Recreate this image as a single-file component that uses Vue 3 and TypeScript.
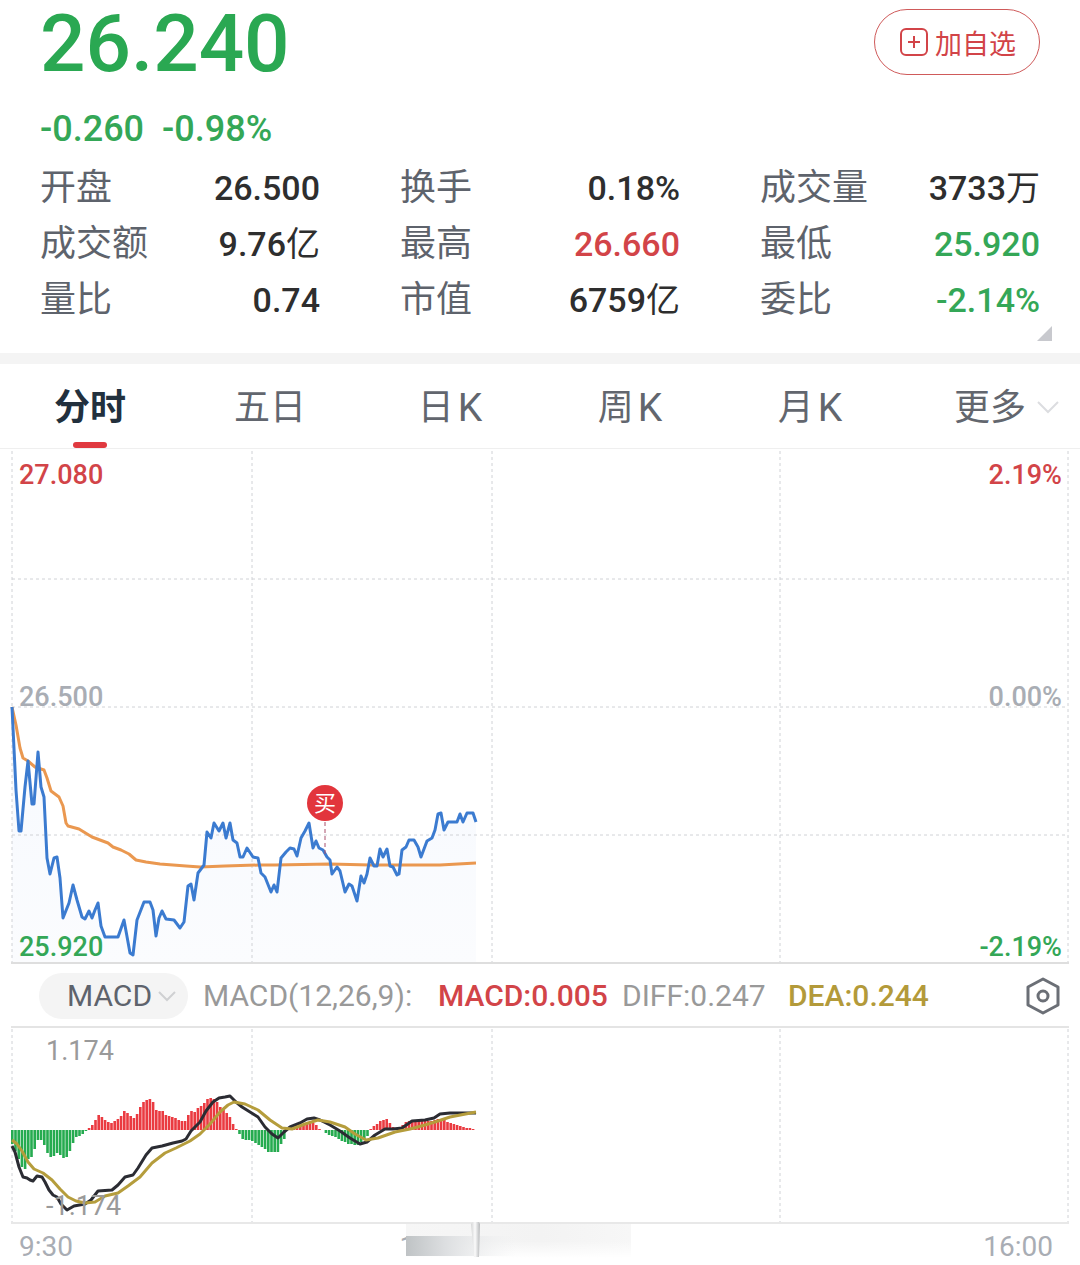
<script setup lang="ts">
import { ref } from 'vue'

type Tone = 'plain' | 'up' | 'down'
interface Stat { label: string; value: string; unit?: string; tone: Tone }
type Point = [number, number]

const stats: Stat[] = [
  { label: '开盘', value: '26.500', tone: 'plain' },
  { label: '换手', value: '0.18%', tone: 'plain' },
  { label: '成交量', value: '3733', unit: '万', tone: 'plain' },
  { label: '成交额', value: '9.76', unit: '亿', tone: 'plain' },
  { label: '最高', value: '26.660', tone: 'up' },
  { label: '最低', value: '25.920', tone: 'down' },
  { label: '量比', value: '0.74', tone: 'plain' },
  { label: '市值', value: '6759', unit: '亿', tone: 'plain' },
  { label: '委比', value: '-2.14%', tone: 'down' },
]

const tabs = [
  { zh: '分时', latin: '' },
  { zh: '五日', latin: '' },
  { zh: '日', latin: 'K' },
  { zh: '周', latin: 'K' },
  { zh: '月', latin: 'K' },
  { zh: '更多', latin: '' },
]
const active = ref(0)
const indicator = ref('MACD')

// Session gridlines shared by both charts
const columns = [12, 252, 492, 780, 1068]

const price: Point[] = [
  [12, 707], [16, 790], [19, 831], [21, 831], [25, 787], [28, 761], [32, 804], [34, 804], [38, 752], [41, 787],
  [44, 797], [47, 858], [50, 874], [54, 858], [57, 857], [60, 878], [63, 918], [69, 903], [73, 885], [77, 900],
  [82, 917], [85, 919], [89, 911], [92, 918], [95, 910], [98, 903], [101, 926], [105, 937], [118, 937], [124, 920],
  [130, 953], [133, 955], [137, 920], [144, 902], [150, 902], [153, 910], [156, 936], [159, 918], [162, 911],
  [166, 919], [174, 920], [180, 928], [184, 922], [188, 886], [191, 884], [194, 900], [198, 873], [204, 865],
  [207, 832], [211, 838], [214, 823], [219, 831], [223, 823], [226, 838], [230, 823], [233, 840], [237, 843],
  [240, 857], [243, 857], [247, 848], [253, 857], [258, 858], [261, 873], [265, 877], [271, 892], [274, 885],
  [277, 892], [281, 858], [286, 852], [290, 848], [294, 849], [297, 856], [301, 838], [305, 831], [309, 823],
  [313, 848], [316, 841], [319, 848], [323, 850], [327, 857], [330, 860], [332, 874], [337, 867], [340, 871],
  [345, 892], [349, 884], [352, 886], [357, 901], [361, 876], [364, 883], [367, 874], [370, 858], [374, 866],
  [377, 866], [380, 849], [383, 857], [387, 849], [390, 866], [393, 867], [397, 875], [399, 874], [402, 850],
  [406, 847], [409, 840], [414, 840], [418, 847], [421, 857], [427, 841], [432, 838], [435, 830], [438, 814],
  [441, 813], [444, 830], [448, 822], [457, 822], [460, 814], [463, 822], [467, 813], [473, 813], [476, 822],
]
const average: Point[] = [
  [12, 707], [16, 725], [20, 748], [23, 758], [28, 761], [35, 767], [44, 770], [47, 778], [51, 791], [59, 797],
  [63, 806], [66, 823], [68, 826], [79, 829], [92, 837], [108, 843], [113, 847], [121, 850], [129, 854],
  [136, 860], [146, 862], [160, 864], [186, 866], [200, 867], [225, 866], [260, 865], [275, 865], [330, 864],
  [370, 865], [405, 865], [440, 865], [476, 863],
]
const diff: Point[] = [
  [12, 1146], [15, 1152], [19, 1167], [23, 1177], [27, 1178], [30, 1180], [33, 1181], [37, 1176], [42, 1177],
  [45, 1182], [49, 1190], [53, 1195], [57, 1197], [61, 1204], [67, 1210], [74, 1206], [85, 1204], [91, 1200],
  [98, 1191], [112, 1190], [118, 1185], [125, 1177], [133, 1175], [138, 1168], [146, 1155], [152, 1148],
  [162, 1146], [173, 1143], [182, 1141], [186, 1139], [191, 1131], [200, 1122], [206, 1111], [213, 1102],
  [219, 1098], [225, 1097], [230, 1096], [236, 1102], [242, 1107], [250, 1112], [258, 1117], [265, 1127],
  [272, 1134], [278, 1138], [284, 1132], [290, 1127], [300, 1123], [307, 1119], [314, 1118], [320, 1120],
  [330, 1125], [340, 1131], [350, 1138], [360, 1144], [367, 1142], [375, 1135], [385, 1129], [393, 1129],
  [402, 1128], [412, 1121], [425, 1120], [434, 1118], [440, 1114], [450, 1113], [476, 1113],
]
const dea: Point[] = [
  [12, 1140], [17, 1144], [22, 1151], [28, 1162], [34, 1169], [43, 1173], [52, 1180], [60, 1189], [68, 1197],
  [76, 1201], [85, 1203], [95, 1202], [105, 1196], [118, 1193], [128, 1186], [140, 1177], [152, 1163],
  [165, 1153], [176, 1148], [190, 1141], [200, 1134], [210, 1124], [220, 1112], [228, 1105], [234, 1102],
  [245, 1104], [258, 1110], [270, 1120], [282, 1128], [292, 1129], [305, 1124], [318, 1120], [330, 1122],
  [345, 1127], [355, 1134], [366, 1140], [378, 1138], [395, 1132], [410, 1129], [425, 1125], [438, 1121],
  [450, 1117], [476, 1112],
]
// Histogram envelope: x and signed bar height
const envelope: Point[] = [
  [12, -14], [15, -20], [18, -28], [21, -36], [24, -42], [27, -30], [30, -28], [33, -25], [36, -12], [39, -9],
  [42, -11], [45, -17], [48, -25], [51, -27], [54, -26], [57, -23], [60, -25], [63, -28], [66, -28], [69, -23],
  [72, -15], [75, -8], [79, -6], [82, -4], [85, -2], [88, 1], [91, 4], [94, 8], [98, 15], [101, 13], [104, 11],
  [107, 8], [111, 7], [114, 9], [118, 11], [121, 14], [124, 19], [127, 17], [130, 14], [134, 12], [137, 16],
  [140, 23], [143, 28], [147, 30], [150, 31], [153, 28], [156, 20], [162, 19], [166, 15], [172, 13], [176, 12],
  [179, 9], [185, 9], [188, 15], [191, 19], [194, 17], [197, 22], [203, 25], [207, 31], [211, 32], [215, 31],
  [219, 24], [222, 21], [226, 17], [229, 15], [232, 7], [235, 3], [238, -2], [242, -9], [249, -10], [253, -11],
  [257, -14], [261, -17], [265, -19], [268, -22], [278, -22], [281, -13], [284, -9], [287, 1], [292, 2], [300, 4],
  [309, 8], [312, 8], [316, 5], [319, 1], [323, 0], [325, -3], [330, -5], [336, -7], [342, -11], [348, -14],
  [358, -15], [362, -11], [367, -7], [370, 1], [375, 5], [380, 9], [386, 11], [389, 8], [392, 4], [396, 1],
  [400, 3], [403, 6], [408, 9], [420, 9], [430, 9], [440, 11], [446, 9], [452, 6], [460, 4], [468, 2], [475, 1],
]

const line = (pts: Point[]): string => pts.map((p) => p.join(',')).join(' ')

function heightAt(x: number): number {
  const i = envelope.findIndex((p) => p[0] >= x)
  if (i < 0) return envelope[envelope.length - 1][1]
  if (i === 0) return envelope[0][1]
  const [x0, y0] = envelope[i - 1]
  const [x1, y1] = envelope[i]
  return Math.round(y0 + ((y1 - y0) * (x - x0)) / (x1 - x0))
}

// One bar per traded minute, 330 minutes over the full width
const step = (1068 - 12) / 330
const bars = Array.from({ length: 145 }, (_, i) => {
  const x = 12 + i * step
  const h = heightAt(x)
  return { x: x - 1, y: h > 0 ? 1130 - h : 1130, h: Math.abs(h), up: h > 0 }
})
</script>

<template>
  <main class="page">
    <header class="quote">
      <div class="top">
        <div class="last">26.240</div>
        <button class="add" type="button">
          <svg width="28" height="28" viewBox="0 0 28 28" fill="none" stroke="currentColor" aria-hidden="true">
            <rect x="1" y="1" width="26" height="26" rx="5" stroke-width="2" />
            <path d="M14 8v12M8 14h12" stroke-width="2" />
          </svg>
          <span>加自选</span>
        </button>
      </div>
      <div class="change"><span>-0.260</span><span>-0.98%</span></div>
      <dl class="stats">
        <div v-for="s in stats" :key="s.label" class="stat">
          <dt>{{ s.label }}</dt>
          <dd :class="s.tone">{{ s.value }}<span v-if="s.unit" class="unit">{{ s.unit }}</span></dd>
        </div>
      </dl>
      <svg class="corner" width="15" height="15" viewBox="0 0 15 15" aria-hidden="true"><path d="M15 0v15H0z" fill="#c8c9ce" /></svg>
    </header>

    <nav class="tabs">
      <button
        v-for="(t, i) in tabs"
        :key="t.zh"
        type="button"
        :class="['tab', { active: active === i }]"
        @click="active = i"
      >
        <span>{{ t.zh }}</span><span v-if="t.latin" class="latin">{{ t.latin }}</span>
        <svg v-if="i === 5" class="more" width="22" height="14" viewBox="0 0 22 14" fill="none" aria-hidden="true">
          <path d="M1 2l10 10L21 2" stroke="#dcdde0" stroke-width="2" />
        </svg>
      </button>
    </nav>

    <section class="chart">
      <svg class="plot" viewBox="0 449 1080 516" role="img" aria-label="分时">
        <defs>
          <linearGradient id="fade" x1="0" y1="707" x2="0" y2="963" gradientUnits="userSpaceOnUse">
            <stop offset="0" stop-color="#f6f9fe" />
            <stop offset="1" stop-color="#fbfcfe" />
          </linearGradient>
        </defs>
        <polygon :points="`12,963 ${line(price)} 476,963`" fill="url(#fade)" />
        <g class="grid">
          <line v-for="x in columns" :key="x" :x1="x" :x2="x" y1="451" y2="963" />
          <line v-for="y in [579, 707, 835]" :key="y" x1="12" x2="1068" :y1="y" :y2="y" />
        </g>
        <line x1="11" x2="1069" y1="963" y2="963" stroke="#dedede" stroke-width="2" />
        <polyline :points="line(average)" class="curve" stroke="#ea9850" />
        <polyline :points="line(price)" class="curve" stroke="#3b7bd0" />
        <line x1="325" x2="325" y1="822" y2="856" stroke="#a8506c" stroke-dasharray="4 3" />
        <circle cx="325" cy="803" r="18" fill="#e2353c" />
        <text x="325" y="811" class="buy">买</text>
      </svg>
      <span class="mark tl up">27.080</span>
      <span class="mark tr up">2.19%</span>
      <span class="mark ml">26.500</span>
      <span class="mark mr">0.00%</span>
      <span class="mark bl down">25.920</span>
      <span class="mark br down">-2.19%</span>
    </section>

    <section class="readings">
      <div class="picker">
        <select v-model="indicator" aria-label="指标">
          <option>MACD</option>
        </select>
        <svg width="18" height="12" viewBox="0 0 18 12" fill="none" aria-hidden="true">
          <path d="M1 2l8 8 8-8" stroke="#cfd0d2" stroke-width="2" />
        </svg>
      </div>
      <div class="values">
        <span>MACD(12,26,9):</span>
        <span class="up strong">MACD:0.005</span>
        <span>DIFF:0.247</span>
        <span class="gold strong">DEA:0.244</span>
      </div>
      <button class="settings" type="button" aria-label="设置">
        <svg width="34" height="38" viewBox="0 0 34 38" fill="none" stroke="#6b6f76" aria-hidden="true">
          <path d="M17 2l15 8v18l-15 8-15-8V10z" stroke-width="3" stroke-linejoin="round" />
          <circle cx="17" cy="19" r="5" stroke-width="3" />
        </svg>
      </button>
    </section>

    <section class="chart">
      <svg class="plot" viewBox="0 1026 1080 198" role="img" aria-label="MACD">
        <g class="grid">
          <line v-for="x in columns" :key="x" :x1="x" :x2="x" y1="1029" y2="1222" />
        </g>
        <line x1="11" x2="1069" y1="1027" y2="1027" stroke="#e4e4e4" stroke-width="2" />
        <line x1="11" x2="1069" y1="1223" y2="1223" stroke="#e8e8e8" stroke-width="2" />
        <rect
          v-for="b in bars"
          :key="b.x"
          :x="b.x"
          :y="b.y"
          width="2.6"
          :height="b.h"
          :fill="b.up ? '#ea3b41' : '#26ab50'"
        />
        <polyline :points="line(diff)" class="curve" stroke="#2b2c33" />
        <polyline :points="line(dea)" class="curve" stroke="#b59d3c" />
      </svg>
      <span class="mark high">1.174</span>
      <span class="mark low">-1.174</span>
    </section>

    <footer class="axis">
      <span>9:30</span>
      <span class="noon">1</span>
      <span>16:00</span>
      <svg class="smudge" viewBox="0 0 1080 42" aria-hidden="true">
        <defs>
          <linearGradient id="wash" x1="0" x2="1" y1="0" y2="0">
            <stop offset="0" stop-color="#f6f6f6" />
            <stop offset="0.6" stop-color="#f3f3f3" />
            <stop offset="1" stop-color="#f7f7f7" />
          </linearGradient>
          <linearGradient id="lift" x1="0" x2="0" y1="0" y2="1">
            <stop offset="0.5" stop-color="#fff" stop-opacity="0" />
            <stop offset="1" stop-color="#fff" />
          </linearGradient>
          <linearGradient id="shade" x1="0" x2="1" y1="0" y2="0">
            <stop offset="0" stop-color="#bfc3c5" />
            <stop offset="0.35" stop-color="#dcdee0" />
            <stop offset="1" stop-color="#eff0f1" stop-opacity="0" />
          </linearGradient>
          <linearGradient id="bar" x1="0" x2="1" y1="0" y2="0">
            <stop offset="0" stop-color="#d4d5d6" />
            <stop offset="0.45" stop-color="#fbfbfb" />
            <stop offset="1" stop-color="#b6b8ba" />
          </linearGradient>
        </defs>
        <rect x="406" y="0" width="225" height="36" fill="#fff" />
        <rect x="406" y="0" width="225" height="34" fill="url(#wash)" />
        <rect x="406" y="0" width="225" height="34" fill="url(#lift)" />
        <rect x="406" y="12" width="110" height="20" fill="url(#shade)" />
        <path d="M471 0l2-2h6l1 2-1 33h-5z" fill="url(#bar)" />
      </svg>
    </footer>
  </main>
</template>

<style>
body {
  margin: 0;
  background: #fff;
}
</style>

<style scoped>
.page {
  font-family: Roboto, "Noto Sans CJK SC", sans-serif;
  color: #2e2e2e;
  background: #fff;
}
button,
select {
  font: inherit;
  color: inherit;
  background: none;
  border: 0;
  padding: 0;
  margin: 0;
  cursor: pointer;
}
.up {
  color: #d24448;
}
.down {
  color: #34a757;
}
.quote {
  position: relative;
  padding: 0 40px 25px;
  border-bottom: 11px solid #f4f4f4;
}
.top {
  display: flex;
  justify-content: space-between;
  align-items: flex-start;
}
.last {
  font-size: 80px;
  line-height: 88px;
  font-weight: 500;
  color: #2aa852;
}
.add {
  box-sizing: border-box;
  display: flex;
  align-items: center;
  gap: 7px;
  height: 66px;
  margin-top: 9px;
  padding: 0 23px 0 25px;
  border: 1px solid #cf5a5a;
  border-radius: 33px;
  font-size: 27px;
  color: #d24448;
}
.change {
  display: flex;
  gap: 18px;
  margin-top: 19px;
  font-size: 36px;
  line-height: 44px;
  font-weight: 500;
  color: #34a757;
}
.stats {
  display: grid;
  grid-template-columns: repeat(3, 1fr);
  column-gap: 80px;
  margin: 9px 0 0;
}
.stat {
  display: flex;
  justify-content: space-between;
  line-height: 56px;
}
.stat dt {
  font-size: 36px;
  color: #5e636c;
}
.stat dd {
  margin: 0;
  font-size: 34px;
  font-weight: 500;
}
.unit {
  font-weight: 400;
}
.corner {
  position: absolute;
  right: 28px;
  bottom: 12px;
}
.tabs {
  display: grid;
  grid-template-columns: repeat(6, 1fr);
  border-bottom: 1px solid #efefef;
}
.tab {
  position: relative;
  display: flex;
  justify-content: center;
  height: 84px;
  font-size: 36px;
  line-height: 88px;
  color: #62666e;
}
.tab.active {
  font-weight: 700;
  color: #22303d;
}
.tab.active::after {
  content: "";
  position: absolute;
  bottom: 0;
  left: 50%;
  width: 34px;
  height: 6px;
  margin-left: -17px;
  border-radius: 3px;
  background: #e0393f;
}
.latin {
  margin-left: 4px;
  font-size: 39px;
}
.more {
  position: absolute;
  right: 21px;
  top: 36px;
}
.chart {
  position: relative;
}
.plot {
  display: block;
  width: 100%;
}
.grid line {
  stroke: #d0d2d6;
  stroke-width: 1;
  stroke-dasharray: 3 3;
}
.curve {
  fill: none;
  stroke-width: 3;
  stroke-linejoin: round;
}
.buy {
  font-family: "Noto Sans CJK SC", sans-serif;
  font-size: 22px;
  text-anchor: middle;
  fill: #fff;
}
.mark {
  position: absolute;
  font-size: 27px;
  line-height: 32px;
  font-weight: 500;
  color: #a9adb4;
}
.mark.up {
  color: #d24448;
}
.mark.down {
  color: #34a757;
}
.tl,
.ml,
.bl {
  left: 19px;
}
.tr,
.mr,
.br {
  right: 18px;
}
.tl,
.tr {
  top: 2%;
}
.ml,
.mr {
  top: 45%;
}
.bl,
.br {
  bottom: 2px;
}
.mark.high,
.mark.low {
  left: 46px;
  font-weight: 400;
  color: #9a9a9a;
}
.high {
  top: 9px;
}
.low {
  bottom: 2px;
}
.readings {
  display: flex;
  align-items: center;
  height: 61px;
  padding: 0 20px 0 39px;
  font-size: 30px;
  color: #999;
}
.picker {
  position: relative;
  flex: none;
}
.picker select {
  appearance: none;
  box-sizing: border-box;
  width: 149px;
  height: 46px;
  padding-left: 28px;
  border-radius: 23px;
  background: #f4f4f4;
  color: #5e636c;
}
.picker svg {
  position: absolute;
  right: 12px;
  top: 17px;
  pointer-events: none;
}
.values {
  flex: 1;
  display: grid;
  grid-template-columns: 235px 184px 166px 1fr;
  margin-left: 15px;
  white-space: nowrap;
}
.strong {
  font-weight: 500;
}
.gold {
  color: #b39a3a;
}
.settings svg {
  display: block;
}
.axis {
  position: relative;
  display: flex;
  justify-content: space-between;
  padding: 7px 27px 2px 19px;
  font-size: 28px;
  line-height: 32px;
  color: #a9adb4;
}
.noon {
  position: absolute;
  left: 37%;
}
.smudge {
  position: absolute;
  left: 0;
  top: 0;
  width: 100%;
  overflow: visible;
}
</style>
